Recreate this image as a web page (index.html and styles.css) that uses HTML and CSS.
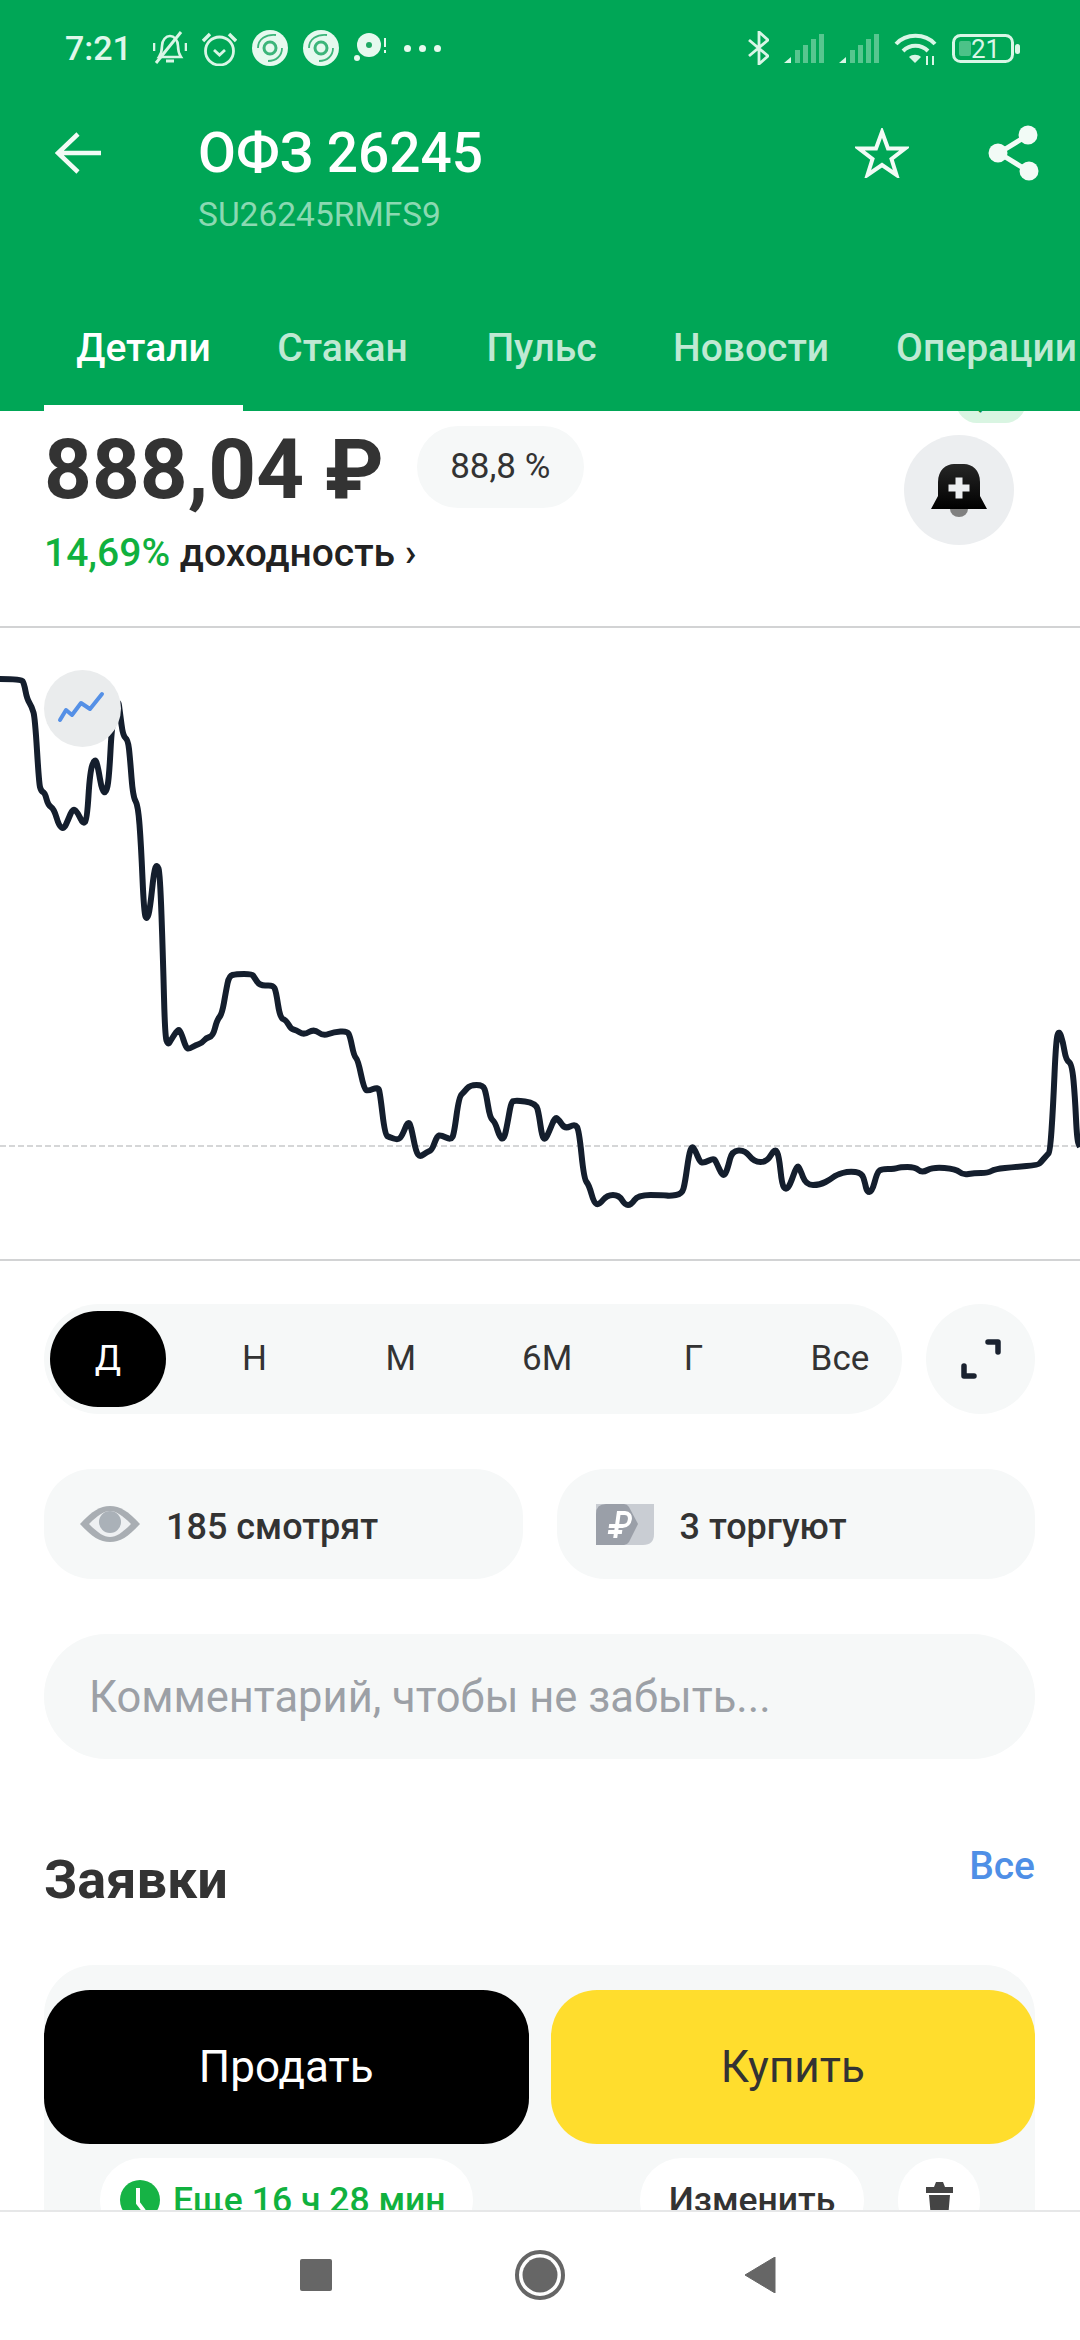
FILE: index.html
```html
<!DOCTYPE html>
<html lang="ru">
<head>
  <meta charset="UTF-8">
  <title>ОФЗ 26245</title>
  <link rel="stylesheet" href="styles.css">
</head>
<body>

<!-- Header -->
<header class="header">
  <div class="status">
    <div class="status-left">
      <span class="time">7:21</span>
      <svg class="st-icon" width="34" height="34" viewBox="0 0 34 34" fill="none" stroke="#d9f6e6" stroke-width="2.6">
        <path d="M6 26c2-3 3-5 3-11 0-6 4-10 8-10s8 4 8 10c0 6 1 8 3 11z"/>
        <path d="M3 32L28 1" stroke-width="3"/>
        <path d="M13 30h8" stroke-width="3"/>
        <path d="M1 12v8M33 12v8"/>
      </svg>
      <svg class="st-icon" width="35" height="35" viewBox="0 0 35 35" fill="none" stroke="#d9f6e6" stroke-width="2.8">
        <circle cx="17.5" cy="20" r="14"/>
        <path d="M12 19l5.500 5 5.500-5"/>
        <path d="M1 10l7-7M34 10l-7-7" stroke-width="3.400"/>
      </svg>
      <svg class="st-icon" width="36" height="36" viewBox="0 0 36 36" fill="none">
        <circle cx="18" cy="18" r="18" fill="#e6f9ef"/>
        <circle cx="18" cy="18" r="6" stroke="#3cb57a" stroke-width="3"/>
        <path d="M6 18C6 9 14 4 24 5M30 18c0 8-6 13-14 13" stroke="#3cb57a" stroke-width="1.800"/>
      </svg>
      <svg class="st-icon" width="36" height="36" viewBox="0 0 36 36" fill="none">
        <circle cx="18" cy="18" r="18" fill="#e6f9ef"/>
        <circle cx="18" cy="18" r="6" stroke="#3cb57a" stroke-width="3"/>
        <path d="M6 18C6 9 14 4 24 5M30 18c0 8-6 13-14 13" stroke="#3cb57a" stroke-width="1.800"/>
      </svg>
      <svg class="st-icon" width="33" height="30" viewBox="0 0 33 30">
        <circle cx="15" cy="12" r="12" fill="#e6f9ef"/>
        <circle cx="15" cy="12" r="3" fill="#1fa964"/>
        <circle cx="3" cy="25" r="3" fill="#e6f9ef"/>
        <path d="M31 5v9M31 17v3" stroke="#e6f9ef" stroke-width="2"/>
      </svg>
      <span class="more"><i></i><i></i><i></i></span>
    </div>
    <div class="status-right">
      <svg class="st-icon" width="21" height="34" viewBox="0 0 21 34" fill="none" stroke="#d9f6e6" stroke-width="2.800">
        <path d="M1 9l19 16-9 8V1l9 8L1 25"/>
      </svg>
      <svg class="st-icon" width="40" height="29" viewBox="0 0 40 29" fill="#d9f6e6">
        <path d="M0 29l7-6v6z"/>
        <g opacity=".4"><rect x="11" y="16" width="5" height="13"/><rect x="19" y="11" width="5" height="18"/><rect x="27" y="5" width="5" height="24"/><rect x="35" y="0" width="5" height="29"/></g>
      </svg>
      <svg class="st-icon" width="40" height="29" viewBox="0 0 40 29" fill="#d9f6e6">
        <path d="M0 29l7-6v6z"/>
        <g opacity=".4"><rect x="11" y="16" width="5" height="13"/><rect x="19" y="11" width="5" height="18"/><rect x="27" y="5" width="5" height="24"/><rect x="35" y="0" width="5" height="29"/></g>
      </svg>
      <svg class="st-icon" width="43" height="33" viewBox="0 0 43 33" fill="none" stroke="#d9f6e6" stroke-width="4">
        <path d="M2 12C12 1 31 1 41 12"/>
        <path d="M9 19c7-7 18-7 25 0"/>
        <path d="M15 25l6 6 6-6c-3-3-9-3-12 0z" fill="#d9f6e6" stroke="none"/>
        <path d="M33 24v9M39 24v9" stroke-width="2"/>
      </svg>
      <svg class="st-icon" width="68" height="29" viewBox="0 0 68 29" fill="none">
        <rect x="1.500" y="1.500" width="59" height="26" rx="7" stroke="#d9f6e6" stroke-width="3"/>
        <rect x="7" y="7" width="12" height="15" rx="2" fill="#d9f6e6" opacity=".35"/>
        <rect x="63" y="10" width="5" height="10" rx="2.500" fill="#d9f6e6"/>
        <text x="19" y="24" class="battery-num">21</text>
      </svg>
    </div>
  </div>

  <div class="toolbar">
    <svg class="back" width="46" height="42" viewBox="0 0 46 42" fill="none" stroke="#f2fbf6" stroke-width="4.500">
      <path d="M23 2L3 21l20 19M3 21h43"/>
    </svg>
    <div class="title-box">
      <div class="title">ОФЗ 26245</div>
      <div class="isin">SU26245RMFS9</div>
    </div>
    <svg class="star" width="54" height="50" viewBox="0 0 54 50" fill="none" stroke="#f2fbf6" stroke-width="4">
      <path d="M27 4l6 16.500h17L36.500 31l5 16L27 37 12.500 47l5-16L4 20.500h17z"/>
    </svg>
    <svg class="share" width="52" height="56" viewBox="0 0 52 56" fill="#f2fbf6" stroke="#f2fbf6">
      <path d="M40 10L11 28l29 18" fill="none" stroke-width="5"/>
      <circle cx="40" cy="10" r="9.500" stroke="none"/>
      <circle cx="10" cy="28" r="9.500" stroke="none"/>
      <circle cx="41" cy="46" r="9.500" stroke="none"/>
    </svg>
  </div>

  <div class="tabs">
    <div class="tab active">Детали</div>
    <div class="tab">Стакан</div>
    <div class="tab">Пульс</div>
    <div class="tab">Новости</div>
    <div class="tab">Операции</div>
  </div>
</header>

<main class="content">
  <div class="change-pill">0,5%</div>

  <!-- Price -->
  <section class="quote">
    <div>
      <div class="price-row">
        <span class="price">888,04 ₽</span>
        <span class="percent">88,8 %</span>
      </div>
      <div class="yield"><span class="yield-num">14,69%</span> доходность ›</div>
    </div>
    <div class="bell">
      <svg width="60" height="60" viewBox="0 0 60 60">
        <defs>
          <linearGradient id="bellFill" x1="0" y1="0" x2="0" y2="1">
            <stop offset="0" stop-color="#262626"/>
            <stop offset="1" stop-color="#000"/>
          </linearGradient>
        </defs>
        <path d="M21 49h18a9 8 0 0 1-18 0z" fill="#808080"/>
        <path d="M9 22C9 10 17 4 25 4h10c8 0 16 6 16 18v14l7 13H2l7-13z" fill="url(#bellFill)"/>
        <path d="M26.500 17.500h7v7h7v7h-7v7h-7v-7h-7v-7h7z" fill="#eceef0"/>
      </svg>
    </div>
  </section>

  <!-- Chart -->
  <section class="chart">
    <svg class="chart-svg" width="1080" height="631" viewBox="0 0 1080 631">
      <line class="chart-base" x1="0" y1="518" x2="1080" y2="518"/>
      <path id="chartLine" class="chart-line" d=""/>
    </svg>
    <div class="chart-badge">
      <svg width="77" height="77" viewBox="0 0 77 77" fill="none" stroke="#5590e6" stroke-width="4" stroke-linecap="round" stroke-linejoin="round">
        <path d="M16 50l6-10 6 5 9-12 9 6 12-15"/>
      </svg>
    </div>
  </section>

  <!-- Range -->
  <section class="range-row">
    <div class="ranges">
      <div class="range active">Д</div>
      <div class="range">Н</div>
      <div class="range">М</div>
      <div class="range">6М</div>
      <div class="range">Г</div>
      <div class="range">Все</div>
    </div>
    <div class="expand">
      <svg width="40" height="40" viewBox="0 0 40 40" fill="none" stroke="#1a2230" stroke-width="5.500" stroke-linecap="round" stroke-linejoin="round">
        <path d="M27 3h10v10M3 27v10h10"/>
      </svg>
    </div>
  </section>

  <section class="stats">
    <div class="stat">
      <svg width="60" height="36" viewBox="0 0 60 36">
        <path d="M0 18C12 5 20 0 30 0s18 5 30 18c-12 13-20 18-30 18S12 31 0 18z" fill="#a9aeb3"/>
        <path d="M9 18c9-9 15-13 21-13s12 4 21 13c-9 9-15 13-21 13S18 27 9 18z" fill="#eef0f2"/>
        <circle cx="30" cy="16" r="11" fill="#aab1b8"/>
      </svg>
      <span class="stat-text">185 смотрят</span>
    </div>
    <div class="stat stat-trade">
      <svg width="58" height="41" viewBox="0 0 58 41">
        <path d="M0 0h58v30q0 11-11 11H0z" fill="#c9cdd3"/>
        <path d="M10 0h18q3 0 5 3l9 17-9 18q-2 3-5 3H0V10Q0 0 10 0z" fill="#9a9fa8"/>
        <g transform="skewX(-8) translate(4 0)" fill="none" stroke="#fff" stroke-width="4">
          <path d="M20 34V9h6c8 0 8 13 0 13H12M12 28h14"/>
        </g>
      </svg>
      <span class="stat-text">3 торгуют</span>
    </div>
  </section>

  <div class="comment">Комментарий, чтобы не забыть...</div>

  <!-- Orders -->
  <section class="orders-head">
    <h2 class="orders-title">Заявки</h2>
    <span class="orders-all">Все</span>
  </section>

  <section class="order-card">
    <div class="order-buttons">
      <div class="btn btn-sell">Продать</div>
      <div class="btn btn-buy">Купить</div>
    </div>
    <div class="order-row">
      <div class="pill pill-time">
        <svg width="40" height="40" viewBox="0 0 40 40">
          <circle cx="20" cy="20" r="20" fill="#16b345"/>
          <path d="M18 8v15l6 8" fill="none" stroke="#fff" stroke-width="4"/>
        </svg>
        <span>Еще 16 ч 28 мин</span>
      </div>
      <div class="order-actions">
        <div class="pill pill-edit">Изменить</div>
        <div class="pill pill-trash">
          <svg width="27" height="36" viewBox="0 0 27 36" fill="#444">
            <path d="M10 0h7l2 5h8v6H0V5h8zM3 13h21l-2 23H5z"/>
          </svg>
        </div>
      </div>
    </div>
  </section>
</main>

<!-- Android nav -->
<footer class="navbar">
  <div class="nav-square"></div>
  <svg class="nav-home" width="52" height="52" viewBox="0 0 52 52">
    <circle cx="26" cy="26" r="23" fill="none" stroke="#666" stroke-width="4"/>
    <circle cx="26" cy="26" r="17.500" fill="#666"/>
  </svg>
  <svg class="nav-back" width="32" height="36" viewBox="0 0 32 36">
    <path d="M31 0v36L1 18z" fill="#666" stroke="#666" stroke-width="1" stroke-linejoin="round"/>
  </svg>
</footer>

<script src="chart.js"></script>
</body>
</html>
```

FILE: styles.css
```css
* {
  box-sizing: border-box;
}
html, body {
  margin: 0;
  padding: 0;
}
body {
  width: 1080px;
  height: 2340px;
  overflow: hidden;
  display: flex;
  flex-direction: column;
  background: #fff;
  font-family: Roboto, "Noto Sans", sans-serif;
  color: #333;
}

/* header */
.header {
  height: 411px;
  flex: none;
  position: relative;
  z-index: 2;
  display: flex;
  flex-direction: column;
  background: #00a656;
  overflow: hidden;
}
.status {
  height: 96px;
  padding: 30px 60px 0 65px;
  display: flex;
  justify-content: space-between;
  align-items: flex-start;
}
.status-left {
  display: flex;
  align-items: center;
  gap: 15px;
  height: 36px;
}
.status-right {
  display: flex;
  align-items: center;
  gap: 15px;
  height: 36px;
}
.time {
  font-size: 34px;
  font-weight: 500;
  color: #dff7ea;
  margin-right: 6px;
}
.more {
  display: flex;
  gap: 8px;
  margin-left: 2px;
}
.more i {
  width: 7px;
  height: 7px;
  border-radius: 50%;
  background: #e6f9ef;
}
.battery-num {
  font-family: Roboto, sans-serif;
  font-size: 26px;
  fill: #d9f6e6;
}
.toolbar {
  display: flex;
  align-items: flex-start;
  padding: 0 40px 0 55px;
  position: relative;
}
.back {
  margin-top: 36px;
  flex: none;
}
.title-box {
  margin-left: 97px;
  flex: 1;
}
.title {
  font-size: 55px;
  font-weight: 500;
  line-height: 64px;
  margin-top: 25px;
  color: #fff;
}
.isin {
  font-size: 33.500px;
  line-height: 40px;
  margin-top: 10px;
  color: #8bd9b2;
}
.star {
  margin-top: 32px;
  margin-right: 79px;
}
.share {
  margin-top: 29px;
}
.tabs {
  margin-top: auto;
  display: flex;
  padding-left: 44px;
  height: 106px;
}
.tab {
  min-width: 199px;
  flex: none;
  padding: 20px 32px 0;
  text-align: center;
  font-size: 39px;
  font-weight: 500;
  line-height: 46px;
  color: #bfe9d3;
  border-bottom: 6px solid transparent;
}
.tab:last-child {
  min-width: 0;
  padding: 20px 0 0 35px;
}
.tab.active {
  color: #fff;
  border-bottom-color: #fff;
}

/* main column */
.content {
  flex: 1;
  position: relative;
  overflow: hidden;
}
.change-pill {
  position: absolute;
  top: -30px;
  left: 956px;
  width: 70px;
  height: 42px;
  border-radius: 21px;
  background: #d9f5e2;
  color: #0c8a3c;
  font-size: 26px;
  font-weight: 700;
  line-height: 36px;
  text-align: center;
}
.quote {
  height: 217px;
  padding: 15px 66px 0 44px;
  display: flex;
  justify-content: space-between;
  align-items: flex-start;
  border-bottom: 2px solid #d2d3d4;
}
.price-row {
  display: flex;
  align-items: flex-start;
}
.price {
  margin-top: 3px;
  font-size: 83.5px;
  font-weight: 700;
  line-height: 82px;
  color: #333;
}
.percent {
  margin-left: 33px;
  width: 167px;
  height: 82px;
  border-radius: 41px;
  background: #f6f8f8;
  font-size: 35px;
  line-height: 82px;
  text-align: center;
}
.yield {
  font-size: 39px;
  font-weight: 500;
  line-height: 44px;
  margin-top: 20px;
  color: #222;
}
.yield-num {
  color: #10b13e;
}
.bell {
  margin-top: 9px;
  width: 110px;
  height: 110px;
  border-radius: 50%;
  background: #eceef0;
  display: flex;
  align-items: center;
  justify-content: center;
}

/* chart */
.chart {
  height: 633px;
  position: relative;
  border-bottom: 2px solid #d2d3d4;
}
.chart-svg {
  display: block;
}
.chart-base {
  stroke: #d5d6d7;
  stroke-width: 2;
  stroke-dasharray: 6 3;
}
.chart-line {
  fill: none;
  stroke: #141e2d;
  stroke-width: 6;
  stroke-linejoin: round;
}
.chart-badge {
  position: absolute;
  left: 44px;
  top: 42px;
  width: 77px;
  height: 77px;
  border-radius: 50%;
  background: #eaeced;
}
.chart-badge svg {
  display: block;
}

/* range */
.range-row {
  margin: 43px 45px 0 44px;
  display: flex;
  justify-content: space-between;
}
.ranges {
  width: 858px;
  height: 110px;
  padding: 7px 4px 7px 6px;
  border-radius: 55px;
  background: #f6f8f8;
  display: flex;
  justify-content: space-between;
}
.range {
  width: 116px;
  height: 96px;
  border-radius: 48px;
  text-align: center;
  font-size: 35px;
  line-height: 96px;
  color: #333;
}
.range.active {
  background: #000;
  color: #fff;
}
.expand {
  width: 109px;
  height: 110px;
  border-radius: 50%;
  background: #f6f8f8;
  display: flex;
  align-items: center;
  justify-content: center;
}

/* stats */
.stats {
  margin: 55px 45px 0 44px;
  display: grid;
  grid-template-columns: 1fr 1fr;
  gap: 34px;
}
.stat {
  height: 110px;
  border-radius: 48px;
  background: #f6f8f8;
  display: flex;
  align-items: center;
  gap: 26px;
  padding-left: 36px;
  font-size: 36px;
  font-weight: 500;
  color: #333;
}
.stat-trade {
  padding-left: 39px;
}
.stat-text {
  padding-top: 5px;
}
.comment {
  margin: 55px 45px 0 44px;
  height: 125px;
  border-radius: 62px;
  background: #f6f8f8;
  padding-left: 45px;
  font-size: 43.500px;
  line-height: 127px;
  color: #9ca0a6;
}

/* orders */
.orders-head {
  margin: 85px 45px 0 44px;
  height: 121px;
  display: flex;
  justify-content: space-between;
  align-items: flex-start;
}
.orders-title {
  margin: 6px 0 0;
  font-size: 54px;
  font-weight: 700;
  line-height: 60px;
  color: #333;
}
.orders-all {
  font-size: 39px;
  font-weight: 500;
  line-height: 44px;
  color: #4f8fe6;
}
.order-card {
  margin: 0 45px 0 44px;
  padding-top: 25px;
  height: 400px;
  border-radius: 50px;
  background: #f6f8f8;
}
.order-buttons {
  display: grid;
  grid-template-columns: 1fr 1fr;
  gap: 22px;
}
.btn {
  height: 154px;
  border-radius: 46px;
  text-align: center;
  font-size: 44px;
  line-height: 154px;
}
.btn-sell {
  background: #000;
  color: #fff;
}
.btn-buy {
  background: #ffdd2d;
  color: #333;
}
.order-row {
  margin-top: 14px;
  padding: 0 55px 0 56px;
  display: flex;
  justify-content: space-between;
}
.order-actions {
  display: flex;
  gap: 34px;
}
.pill {
  height: 84px;
  border-radius: 42px;
  background: #fff;
  display: flex;
  align-items: center;
  font-size: 35.500px;
  font-weight: 500;
}
.pill-time {
  width: 373px;
  padding-left: 20px;
  gap: 13px;
  color: #10b13e;
}
.pill-edit {
  width: 224px;
  justify-content: center;
  color: #333;
}
.pill-trash {
  width: 82px;
  justify-content: center;
}

/* bottom bar */
.navbar {
  height: 130px;
  flex: none;
  position: relative;
  z-index: 2;
  background: #fff;
  border-top: 2px solid #e6e7e8;
  padding: 20px 304px 0 300px;
  display: flex;
  justify-content: space-between;
  align-items: flex-start;
}
.nav-square {
  margin-top: 27px;
  width: 32px;
  height: 32px;
  border-radius: 2px;
  background: #666;
}
.nav-home {
  margin: 17px 0 0 3px;
}
.nav-back {
  margin-top: 25px;
}
```

FILE: chart.js
```js
// price points as x, y in px
const points = [
  [0,51],[21,51],[24,55],[27,71],[32,79],[35,90],[39,155],[41,163],[45,165],[48,177],[54,181],[59,198],[64,201],
  [68,192],[73,180],[78,185],[83,196],[87,192],[90,143],[95,130],[98,139],[102,163],[106,165],[109,151],[112,94],
  [118,70],[120,85],[123,108],[128,112],[130,130],[133,169],[138,177],[141,216],[144,285],[147,292],[150,281],
  [154,243],[157,236],[160,245],[163,330],[165,408],[168,417],[171,412],[178,401],[181,404],[186,420],[189,421],
  [196,417],[202,415],[206,410],[213,408],[217,392],[222,386],[226,363],[229,348],[236,346],[252,346],[254,349],
  [260,358],[273,357],[276,363],[280,390],[286,392],[291,401],[296,402],[304,407],[314,401],[323,408],[334,404],
  [347,403],[350,408],[354,428],[358,432],[364,461],[368,463],[378,459],[380,465],[385,507],[389,509],[398,512],
  [402,508],[408,493],[411,498],[416,524],[420,529],[427,524],[432,522],[437,508],[441,507],[451,512],[454,506],
  [459,469],[464,464],[470,457],[483,457],[486,465],[490,490],[495,494],[500,510],[504,511],[507,498],[511,475],
  [514,472],[536,475],[539,487],[542,508],[545,512],[549,504],[555,489],[559,492],[565,501],[575,496],[579,502],
  [584,551],[589,557],[594,575],[599,577],[607,567],[619,567],[625,577],[631,577],[638,567],[663,567],[670,568],
  [682,566],[685,555],[689,526],[692,518],[695,522],[700,534],[704,535],[714,530],[717,536],[722,547],[725,547],
  [728,539],[732,523],[745,522],[754,534],[767,534],[775,520],[779,528],[782,557],[786,562],[790,557],[797,537],
  [800,541],[806,557],[820,557],[831,551],[836,547],[849,543],[862,545],[865,555],[867,564],[872,564],[877,545],
  [881,541],[895,541],[900,539],[915,539],[922,545],[933,539],[956,541],[963,547],[974,545],[988,545],[995,541],
  [1015,539],[1038,537],[1041,534],[1047,527],[1050,524],[1053,481],[1056,412],[1059,402],[1063,414],[1066,432],
  [1072,436],[1075,469],[1077,512],[1080,519]
];

// round the corners: curve through the midpoints
let d = 'M' + points[0][0] + ' ' + points[0][1];
for (let i = 1; i < points.length - 1; i++) {
  const midX = (points[i][0] + points[i + 1][0]) / 2;
  const midY = (points[i][1] + points[i + 1][1]) / 2;
  d += ' Q' + points[i][0] + ' ' + points[i][1] + ' ' + midX + ' ' + midY;
}
d += ' L' + points[points.length - 1][0] + ' ' + points[points.length - 1][1];
document.getElementById('chartLine').setAttribute('d', d);
```
